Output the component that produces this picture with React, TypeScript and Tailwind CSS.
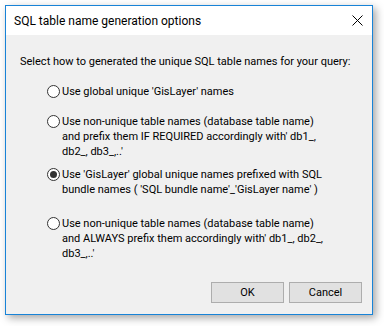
type Opt = { lines: string[]; checked?: boolean; mt: string };

const options: Opt[] = [
  { lines: ["Use global unique 'GisLayer' names"], mt: "mt-[15px]" },
  {
    lines: [
      "Use non-unique table names (database table name)",
      "and prefix them IF REQUIRED accordingly with' db1_,",
      "db2_, db3_,..'",
    ],
    mt: "mt-[15px]",
  },
  {
    lines: [
      "Use 'GisLayer' global unique names prefixed with SQL",
      "bundle names ( 'SQL bundle name'_'GisLayer name' )",
    ],
    checked: true,
    mt: "mt-[8px]",
  },
  {
    lines: [
      "Use non-unique table names (database table name)",
      "and ALWAYS prefix them accordingly with' db1_, db2_,",
      "db3_,..'",
    ],
    mt: "mt-[19px]",
  },
];

function Radio({ checked }: { checked?: boolean }) {
  return (
    <span className="mt-px flex h-[13px] w-[13px] shrink-0 items-center justify-center rounded-full border border-[#333333] bg-white">
      {checked && <span className="h-[7px] w-[7px] rounded-full bg-[#333333]" />}
    </span>
  );
}

export default function App() {
  return (
    <div className="h-[326px] w-[384px] bg-white pl-[5px] pt-[5px] font-['Roboto',sans-serif] text-[11px] text-black">
      <div className="flex h-[310px] w-[368px] flex-col border border-[#1883d7] shadow-[3px_3px_8px_rgba(0,0,0,0.35)]">
        <div className="flex h-[29px] items-center justify-between bg-white pl-[8px] pr-[9px]">
          <span className="text-[12px]">SQL table name generation options</span>
          <svg width="11" height="11" viewBox="0 0 11 11" className="text-black">
            <path d="M0.5 0.5 L10.5 10.5 M10.5 0.5 L0.5 10.5" stroke="currentColor" strokeWidth="1" />
          </svg>
        </div>
        <div className="flex flex-1 flex-col bg-[#f0f0f0] px-[14px] pt-[19px] pb-[11px] leading-[15px]">
          <p className="whitespace-nowrap">Select how to generated the unique SQL table names for your query:</p>
          <div className="flex flex-col pl-[27px]">
            {options.map((o, i) => (
              <label key={i} className={`${o.mt} flex gap-[2px]`}>
                <Radio checked={o.checked} />
                <span className="whitespace-nowrap">
                  {o.lines.map((l, j) => (
                    <span key={j} className="block">
                      {l}
                    </span>
                  ))}
                </span>
              </label>
            ))}
          </div>
          <div className="-mr-[4px] mt-auto flex justify-end gap-[5px]">
            <button className="h-[21px] w-[73px] border border-[#adadad] bg-[#e1e1e1]">OK</button>
            <button className="h-[21px] w-[73px] border border-[#adadad] bg-[#e1e1e1]">Cancel</button>
          </div>
        </div>
      </div>
    </div>
  );
}
